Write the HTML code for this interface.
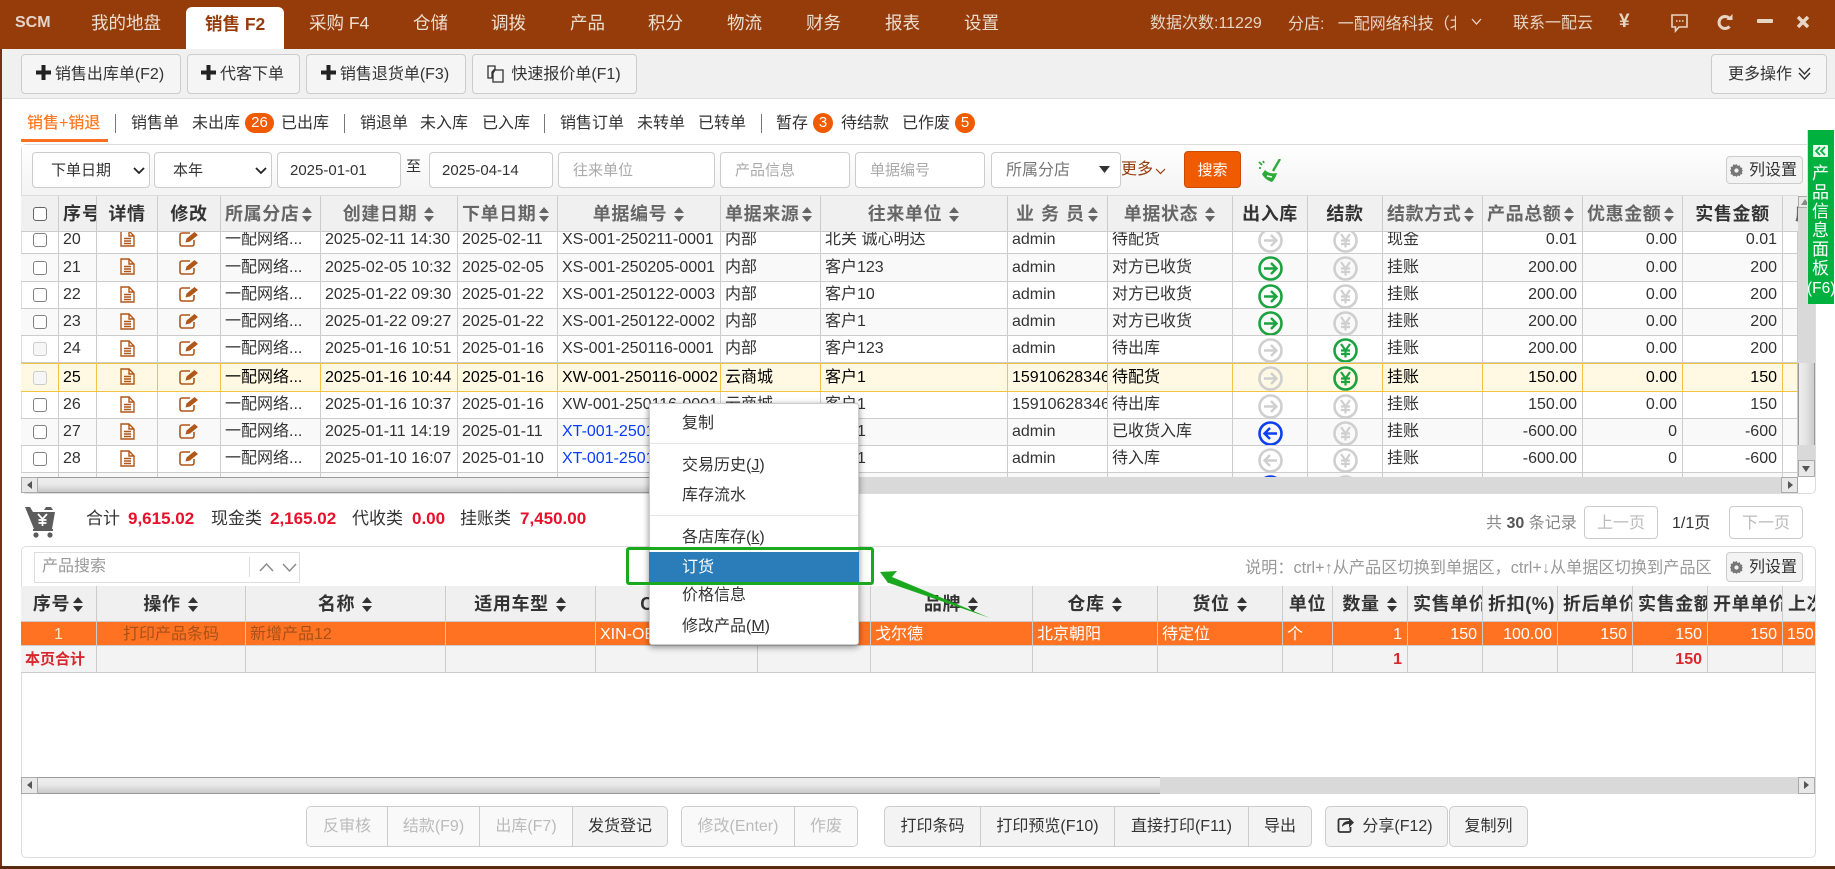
<!DOCTYPE html>
<html lang="zh"><head><meta charset="utf-8"><title>SCM</title>
<style>
html,body{margin:0;padding:0}
body{width:1835px;height:869px;position:relative;overflow:hidden;background:#fff;font-family:"Liberation Sans","Noto Sans CJK SC",sans-serif;font-size:16px;color:#333}
*{box-sizing:border-box}
.a{position:absolute;white-space:nowrap;line-height:20px}
.n{position:absolute;white-space:nowrap;top:12px;line-height:22px;font-size:17.5px;color:#ecdfd2}
.r{position:absolute;white-space:nowrap;top:13px;line-height:22px;font-size:16px;color:#e6d5c5}
.btn{position:absolute;border:1px solid #ccc;border-radius:4px;background:#f5f5f5;line-height:40px;white-space:nowrap;color:#333;text-align:center}
.sub{position:absolute;top:114px;line-height:20px;white-space:nowrap;font-size:16px}
.sep{position:absolute;top:114px;height:19px;width:1px;background:#777}
.bd{position:absolute;top:113px;height:20px;border-radius:10px;background:#f05a00;color:#fff;text-align:center;line-height:20px;font-size:15px}
.inp{position:absolute;top:152px;height:36px;border:1px solid #ccc;border-radius:4px;background:#fff;font-size:15px;line-height:36px;padding-left:14px;white-space:nowrap;overflow:hidden}
.ph{color:#aaa}
table{border-collapse:separate;border-spacing:0;table-layout:fixed;position:absolute;left:0}
td,th{padding:0 4px;border-right:1px solid #ccc;border-bottom:1px solid #ccc;white-space:nowrap;overflow:hidden;vertical-align:middle;text-align:left;font-weight:400;line-height:20px}
th{text-align:center;font-size:18px;font-weight:700;color:#666;letter-spacing:.6px;background:#f0f0f0;padding:0 4px}
th.k{color:#333}
.c{text-align:center}.rr{text-align:right;padding-right:5px}
.s{display:inline-block;width:11px;height:15px;position:relative;vertical-align:-2px;margin-left:7px}
.s:before,.s:after{content:"";position:absolute;left:0;border-left:5.5px solid transparent;border-right:5.5px solid transparent}
.s:before{top:0;border-bottom:6px solid currentColor}
.s:after{bottom:0;border-top:6px solid currentColor}
.cb{display:block;width:14px;height:14px;border:1.5px solid #808080;border-radius:3px;background:#fff;margin:auto}
.cb.x{border-color:#ccc;background:#f6f6f6}
.ic{display:block;margin:auto}
.d{width:15px;height:17px;color:#b0571a;position:relative;top:-1px}
.e{width:20px;height:16px;color:#b0571a;position:relative;top:-1px}
.o{width:25px;height:25px;position:relative;top:1px}
.g{color:#1ba33f}.w{color:#cfcfcf}.u{color:#0b3ff0}
tr.st td{background:#f9f9f9}
tr.hl td{background:#fff9e3;color:#000;border-top:1px solid #f5c242;border-bottom:1px solid #f5c242;border-right-color:#f5c242}
tr.og td{padding-top:2px}
.blue{color:#0a3cff}
.grp{position:absolute;top:806px;height:41px;display:flex;border:1px solid #ccc;border-radius:5px;overflow:hidden;line-height:39px;background:#f3f3f3;color:#333;text-align:center;white-space:nowrap}
.grp b{font-weight:400;border-right:1px solid #ccc;display:block;height:39px}
.grp b:last-child{border-right:0}
.grp .dis{background:#f9f9f9;color:#bbb}
.m{position:absolute;left:682px;line-height:22px;font-size:16px;color:#333;white-space:nowrap}
.m u{text-decoration:underline}
.gs{position:absolute;border:1px solid #ccc;border-radius:4px;background:#f3f3f3;font-size:16px;line-height:28px;white-space:nowrap;padding-left:22px;color:#333}
.vt{position:absolute;left:1807px;width:27px;text-align:center;color:#fff;font-size:17px;line-height:19px}
.sbbg{background:linear-gradient(#eee 0,#e9e9e9 45%,#c9c9c9 100%);border-top:1px solid #999;border-bottom:1px solid #999}
</style></head>
<body>
<svg width="0" height="0" style="position:absolute">
<defs>
<symbol id="d" viewBox="0 0 15 17"><path d="M1 1h8l5 5v10H1zM9 1v5h5M4 8.5h7M4 11h7M4 13.5h7" fill="none" stroke="currentColor" stroke-width="1.4"/></symbol>
<symbol id="e" viewBox="0 0 20 16"><path d="M15 9v4a2 2 0 0 1-2 2H3a2 2 0 0 1-2-2V4a2 2 0 0 1 2-2h8" fill="none" stroke="currentColor" stroke-width="1.6"/><path d="M6.5 11.5l1-4L15.5 1 19 4l-8 6.5z" fill="currentColor"/></symbol>
<symbol id="ar" viewBox="0 0 25 25"><circle cx="12.5" cy="12.5" r="11" fill="none" stroke="currentColor" stroke-width="2.6"/><path d="M6 12.5h12M13 7l5.5 5.5L13 18" fill="none" stroke="currentColor" stroke-width="2.4"/></symbol>
<symbol id="al" viewBox="0 0 25 25"><circle cx="12.5" cy="12.5" r="11" fill="none" stroke="currentColor" stroke-width="2.6"/><path d="M19 12.5H7M12 7l-5.5 5.5L12 18" fill="none" stroke="currentColor" stroke-width="2.4"/></symbol>
<symbol id="y" viewBox="0 0 25 25"><circle cx="12.5" cy="12.5" r="11" fill="none" stroke="currentColor" stroke-width="2.6"/><path d="M8 6l4.5 6.5L17 6M12.5 12v7.5M8 12.5h9M8 16h9" fill="none" stroke="currentColor" stroke-width="2.2"/></symbol>
<symbol id="gear" viewBox="0 0 14 14"><path d="M7 0l1.3 2 2.300-.6.5 2.300 2.300.5-.6 2.300L14 7l-1.200 1.500.6 2.300-2.300.5-.5 1.700-2.300-.6L7 14l-1.300-1.300-2.300.6-.5-1.700-2.300-.5.6-2.300L0 7l1.200-1.500-.6-2.300 2.300-.5.5-2.300 2.300.6z" fill="#777"/><circle cx="7" cy="7" r="2.300" fill="#f3f3f3"/></symbol>
</defs></svg>

<!-- header -->
<div style="position:absolute;left:0;top:0;width:1835px;height:49px;background:#963c0a"></div>
<div style="position:absolute;left:186px;top:7px;width:98px;height:42px;background:#fff;border-radius:6px 6px 0 0"></div>
<span class="n" style="left:15px;font-size:16px;font-weight:700;color:#e2d6cc">SCM</span>
<span class="n" style="left:91px">我的地盘</span>
<span class="n" style="left:205px;top:13px;color:#963c0a;font-weight:700">销售 F2</span>
<span class="n" style="left:309px">采购 F4</span>
<span class="n" style="left:413px">仓储</span>
<span class="n" style="left:491px">调拨</span>
<span class="n" style="left:570px">产品</span>
<span class="n" style="left:648px">积分</span>
<span class="n" style="left:727px">物流</span>
<span class="n" style="left:806px">财务</span>
<span class="n" style="left:885px">报表</span>
<span class="n" style="left:964px">设置</span>
<span class="r" style="left:1150px">数据次数:11229</span>
<span class="r" style="left:1288px;width:168px;overflow:hidden;top:14px">分店:&nbsp;&nbsp;&nbsp;一配网络科技（北京）</span>
<svg style="position:absolute;left:1471px;top:18px" width="11" height="8"><path d="M1 1l4.5 5L10 1" fill="none" stroke="#e6d5c5" stroke-width="1.3"/></svg>
<span class="r" style="left:1513px">联系一配云</span>
<span class="r" style="left:1619px;font-weight:700;font-size:19px;top:11px">¥</span>
<svg style="position:absolute;left:1670px;top:13px" width="20" height="20"><path d="M2 2h15v12H9l-3.5 4v-4H2z" fill="none" stroke="#e6d5c5" stroke-width="1.6"/><path d="M6 8h1.500M9 8h1.500M12 8h1.500" stroke="#e6d5c5" stroke-width="1.6"/></svg>
<svg style="position:absolute;left:1717px;top:14px" width="16" height="17"><path d="M12.5 4.500A6 6 0 1 0 12.5 12.500" fill="none" stroke="#e6d5c5" stroke-width="3"/><path d="M9.500 6h6V0z" fill="#e6d5c5"/></svg>
<div style="position:absolute;left:1757px;top:19px;width:16px;height:4px;background:#e6d5c5;border-radius:1px"></div>
<svg style="position:absolute;left:1796px;top:15px" width="14" height="14"><path d="M2 2l10 10M12 2L2 12" stroke="#e6d5c5" stroke-width="3.4"/></svg>

<!-- toolbar -->
<div style="position:absolute;left:0;top:49px;width:1835px;height:50px;background:#f0f0f0;border-bottom:1px solid #ddd"></div>
<div class="btn" style="left:21px;top:54px;width:160px;height:40px;padding-left:17px">销售出库单(F2)</div>
<div class="btn" style="left:187px;top:54px;width:113px;height:40px;padding-left:17px">代客下单</div>
<div class="btn" style="left:306px;top:54px;width:160px;height:40px;padding-left:17px">销售退货单(F3)</div>
<div class="btn" style="left:472px;top:54px;width:165px;height:40px;padding-left:23px">快速报价单(F1)</div>
<svg style="position:absolute;left:36px;top:65px" width="15" height="15"><path d="M7.500 0v15M0 7.500h15" stroke="#222" stroke-width="4"/></svg>
<svg style="position:absolute;left:201px;top:65px" width="15" height="15"><path d="M7.500 0v15M0 7.500h15" stroke="#222" stroke-width="4"/></svg>
<svg style="position:absolute;left:321px;top:65px" width="15" height="15"><path d="M7.500 0v15M0 7.500h15" stroke="#222" stroke-width="4"/></svg>
<svg style="position:absolute;left:487px;top:65px" width="18" height="18"><path d="M1 1h7v3l-3 3v6H1zM8 5h8v12H6V8z" fill="#f5f5f5" stroke="#333" stroke-width="1.3"/></svg>
<div class="btn" style="left:1711px;top:54px;width:116px;height:40px;padding-right:18px">更多操作</div>
<svg style="position:absolute;left:1797px;top:66px" width="15" height="16"><path d="M2 2l5.500 6L13 2M2 7l5.500 6L13 7" fill="none" stroke="#333" stroke-width="1.4"/></svg>

<!-- sub tabs -->
<span class="sub" style="left:27px;color:#ff7a22;font-weight:500">销售+销退</span>
<div style="position:absolute;left:21px;top:139px;width:87px;height:3px;background:#ff6f1f"></div>
<span class="sep" style="left:115px"></span>
<span class="sub" style="left:131px">销售单</span>
<span class="sub" style="left:192px">未出库</span>
<span class="bd" style="left:245px;width:29px">26</span>
<span class="sub" style="left:281px">已出库</span>
<span class="sep" style="left:344px"></span>
<span class="sub" style="left:360px">销退单</span>
<span class="sub" style="left:420px">未入库</span>
<span class="sub" style="left:482px">已入库</span>
<span class="sep" style="left:544px"></span>
<span class="sub" style="left:560px">销售订单</span>
<span class="sub" style="left:637px">未转单</span>
<span class="sub" style="left:698px">已转单</span>
<span class="sep" style="left:761px"></span>
<span class="sub" style="left:776px">暂存</span>
<span class="bd" style="left:813px;width:20px">3</span>
<span class="sub" style="left:841px">待结款</span>
<span class="sub" style="left:902px">已作废</span>
<span class="bd" style="left:955px;width:20px">5</span>

<!-- filter panel -->
<div style="position:absolute;left:21px;top:144px;width:1795px;height:350px;border:1px solid #ddd;border-radius:5px"></div>
<div style="position:absolute;left:22px;top:145px;width:1793px;height:51px;background:linear-gradient(#fff,#f3f3f3)"></div>
<div class="inp" style="left:32px;width:118px;padding-left:18px">下单日期</div>
<svg style="position:absolute;left:133px;top:167px" width="12" height="8"><path d="M1 1l5 5 5-5" fill="none" stroke="#222" stroke-width="1.8"/></svg>
<div class="inp" style="left:154px;width:118px;padding-left:18px">本年</div>
<svg style="position:absolute;left:255px;top:167px" width="12" height="8"><path d="M1 1l5 5 5-5" fill="none" stroke="#222" stroke-width="1.8"/></svg>
<div class="inp" style="left:277px;width:124px;padding-left:12px">2025-01-01</div>
<span class="a" style="left:406px;top:157px;font-size:15px">至</span>
<div class="inp" style="left:429px;width:124px;padding-left:12px">2025-04-14</div>
<div class="inp ph" style="left:558px;width:157px">往来单位</div>
<div class="inp ph" style="left:720px;width:130px">产品信息</div>
<div class="inp ph" style="left:855px;width:130px">单据编号</div>
<div class="inp" style="left:991px;width:130px;font-size:16px;color:#777">所属分店</div>
<svg style="position:absolute;left:1099px;top:166px" width="11" height="7"><path d="M0 0h11L5.500 7z" fill="#333"/></svg>
<span class="a" style="left:1121px;top:160px;color:#963c0a">更多</span>
<svg style="position:absolute;left:1155px;top:168px" width="11" height="7"><path d="M1 1l4.500 4.500L10 1" fill="none" stroke="#963c0a" stroke-width="1.2"/></svg>
<div style="position:absolute;left:1184px;top:151px;width:57px;height:37px;background:#f05a00;border:1px solid #c94c06;border-radius:4px;color:#fff;text-align:center;line-height:37px;font-size:15px">搜索</div>
<svg style="position:absolute;left:1258px;top:159px" width="25" height="24" fill="none" stroke="#2eaa3a"><path d="M22 0l-7 12" stroke-width="2.400"/><path d="M7 11c3 3 7 4 12 3-1 4-3 7-5 9-4-1-8-4-10-8z" fill="#2eaa3a" stroke="none"/><path d="M1 3l3 3M5 2l1 2M1 9l2 0" stroke-width="1.8"/><path d="M9 17l5 1" stroke="#fff" stroke-width="1.5"/></svg>
<div class="gs" style="left:1726px;top:156px;width:77px;height:28px">列设置</div>
<svg style="position:absolute;left:1730px;top:164px" width="13" height="13"><use href="#gear"/></svg>

<!-- upper table -->
<div style="position:absolute;left:21px;top:195px;width:1777px;height:37px;overflow:hidden;border-top:1px solid #ddd">
<table style="top:0;width:1777px">
<colgroup><col style="width:38px"><col style="width:38px"><col style="width:61px"><col style="width:63px"><col style="width:100px"><col style="width:137px"><col style="width:100px"><col style="width:163px"><col style="width:100px"><col style="width:187px"><col style="width:100px"><col style="width:125px"><col style="width:75px"><col style="width:75px"><col style="width:100px"><col style="width:100px"><col style="width:100px"><col style="width:100px"><col style="width:15px"></colgroup>
<tr style="height:36px">
<th style="padding:0;background:#f0f0f0"><span class="cb" style="border-color:#666;border-width:1.5px"></span></th>
<th class="k" style="text-align:left;padding:0 0 0 4px;letter-spacing:1px">序号</th>
<th class="k">详情</th><th class="k">修改</th>
<th style="padding:0 0 0 4px;text-align:left">所属分店<i class="s" style="margin-left:3px"></i></th>
<th>创建日期<i class="s"></i></th>
<th style="padding:0 0 0 4px;text-align:left">下单日期<i class="s" style="margin-left:3px"></i></th>
<th>单据编号<i class="s"></i></th>
<th style="padding:0 0 0 4px;text-align:left">单据来源<i class="s" style="margin-left:3px"></i></th>
<th>往来单位<i class="s"></i></th>
<th style="padding:0;letter-spacing:1px">业 务 员<i class="s" style="margin-left:3px"></i></th>
<th>单据状态<i class="s"></i></th>
<th class="k" style="padding:0">出入库</th><th class="k">结款</th>
<th style="padding:0 0 0 4px;text-align:left">结款方式<i class="s" style="margin-left:3px"></i></th>
<th style="padding:0 0 0 4px;text-align:left">产品总额<i class="s" style="margin-left:3px"></i></th>
<th style="padding:0 0 0 4px;text-align:left">优惠金额<i class="s" style="margin-left:3px"></i></th>
<th class="k">实售金额</th>
<th style="padding:0 0 0 12px;text-align:left;border-right:0">应收</th>
</tr></table></div>

<div style="position:absolute;left:21px;top:232px;width:1777px;height:245px;overflow:hidden">
<table style="top:-6px;width:1777px">
<colgroup><col style="width:38px"><col style="width:38px"><col style="width:61px"><col style="width:63px"><col style="width:100px"><col style="width:137px"><col style="width:100px"><col style="width:163px"><col style="width:100px"><col style="width:187px"><col style="width:100px"><col style="width:125px"><col style="width:75px"><col style="width:75px"><col style="width:100px"><col style="width:100px"><col style="width:100px"><col style="width:100px"><col style="width:15px"></colgroup>
<tr style="height:28px"><td><i class="cb"></i></td><td>20</td><td><svg class="ic d"><use href="#d"/></svg></td><td><svg class="ic e"><use href="#e"/></svg></td><td>一配网络...</td><td>2025-02-11 14:30</td><td>2025-02-11</td><td>XS-001-250211-0001</td><td>内部</td><td>北关 诚心明达</td><td>admin</td><td>待配货</td><td><svg class="ic o w"><use href="#ar"/></svg></td><td><svg class="ic o w"><use href="#y"/></svg></td><td>现金</td><td class="rr">0.01</td><td class="rr">0.00</td><td class="rr">0.01</td><td></td></tr>
<tr class="st" style="height:28px"><td><i class="cb"></i></td><td>21</td><td><svg class="ic d"><use href="#d"/></svg></td><td><svg class="ic e"><use href="#e"/></svg></td><td>一配网络...</td><td>2025-02-05 10:32</td><td>2025-02-05</td><td>XS-001-250205-0001</td><td>内部</td><td>客户123</td><td>admin</td><td>对方已收货</td><td><svg class="ic o g"><use href="#ar"/></svg></td><td><svg class="ic o w"><use href="#y"/></svg></td><td>挂账</td><td class="rr">200.00</td><td class="rr">0.00</td><td class="rr">200</td><td></td></tr>
<tr style="height:27px"><td><i class="cb"></i></td><td>22</td><td><svg class="ic d"><use href="#d"/></svg></td><td><svg class="ic e"><use href="#e"/></svg></td><td>一配网络...</td><td>2025-01-22 09:30</td><td>2025-01-22</td><td>XS-001-250122-0003</td><td>内部</td><td>客户10</td><td>admin</td><td>对方已收货</td><td><svg class="ic o g"><use href="#ar"/></svg></td><td><svg class="ic o w"><use href="#y"/></svg></td><td>挂账</td><td class="rr">200.00</td><td class="rr">0.00</td><td class="rr">200</td><td></td></tr>
<tr class="st" style="height:27px"><td><i class="cb"></i></td><td>23</td><td><svg class="ic d"><use href="#d"/></svg></td><td><svg class="ic e"><use href="#e"/></svg></td><td>一配网络...</td><td>2025-01-22 09:27</td><td>2025-01-22</td><td>XS-001-250122-0002</td><td>内部</td><td>客户1</td><td>admin</td><td>对方已收货</td><td><svg class="ic o g"><use href="#ar"/></svg></td><td><svg class="ic o w"><use href="#y"/></svg></td><td>挂账</td><td class="rr">200.00</td><td class="rr">0.00</td><td class="rr">200</td><td></td></tr>
<tr style="height:27px"><td><i class="cb x"></i></td><td>24</td><td><svg class="ic d"><use href="#d"/></svg></td><td><svg class="ic e"><use href="#e"/></svg></td><td>一配网络...</td><td>2025-01-16 10:51</td><td>2025-01-16</td><td>XS-001-250116-0001</td><td>内部</td><td>客户123</td><td>admin</td><td>待出库</td><td><svg class="ic o w"><use href="#ar"/></svg></td><td><svg class="ic o g"><use href="#y"/></svg></td><td>挂账</td><td class="rr">200.00</td><td class="rr">0.00</td><td class="rr">200</td><td></td></tr>
<tr class="hl" style="height:29px"><td><i class="cb x"></i></td><td>25</td><td><svg class="ic d"><use href="#d"/></svg></td><td><svg class="ic e"><use href="#e"/></svg></td><td>一配网络...</td><td>2025-01-16 10:44</td><td>2025-01-16</td><td>XW-001-250116-0002</td><td>云商城</td><td>客户1</td><td>15910628346</td><td>待配货</td><td><svg class="ic o w"><use href="#ar"/></svg></td><td><svg class="ic o g"><use href="#y"/></svg></td><td>挂账</td><td class="rr">150.00</td><td class="rr">0.00</td><td class="rr">150</td><td></td></tr>
<tr style="height:27px"><td><i class="cb"></i></td><td>26</td><td><svg class="ic d"><use href="#d"/></svg></td><td><svg class="ic e"><use href="#e"/></svg></td><td>一配网络...</td><td>2025-01-16 10:37</td><td>2025-01-16</td><td>XW-001-250116-0001</td><td>云商城</td><td>客户1</td><td>15910628346</td><td>待出库</td><td><svg class="ic o w"><use href="#ar"/></svg></td><td><svg class="ic o w"><use href="#y"/></svg></td><td>挂账</td><td class="rr">150.00</td><td class="rr">0.00</td><td class="rr">150</td><td></td></tr>
<tr class="st" style="height:27px"><td><i class="cb"></i></td><td>27</td><td><svg class="ic d"><use href="#d"/></svg></td><td><svg class="ic e"><use href="#e"/></svg></td><td>一配网络...</td><td>2025-01-11 14:19</td><td>2025-01-11</td><td class="blue">XT-001-250111-0001</td><td>内部</td><td>客户1</td><td>admin</td><td>已收货入库</td><td><svg class="ic o u"><use href="#al"/></svg></td><td><svg class="ic o w"><use href="#y"/></svg></td><td>挂账</td><td class="rr">-600.00</td><td class="rr">0</td><td class="rr">-600</td><td></td></tr>
<tr style="height:27px"><td><i class="cb"></i></td><td>28</td><td><svg class="ic d"><use href="#d"/></svg></td><td><svg class="ic e"><use href="#e"/></svg></td><td>一配网络...</td><td>2025-01-10 16:07</td><td>2025-01-10</td><td class="blue">XT-001-250110-0001</td><td>内部</td><td>客户1</td><td>admin</td><td>待入库</td><td><svg class="ic o w"><use href="#al"/></svg></td><td><svg class="ic o w"><use href="#y"/></svg></td><td>挂账</td><td class="rr">-600.00</td><td class="rr">0</td><td class="rr">-600</td><td></td></tr>
<tr class="st" style="height:27px"><td></td><td></td><td><svg class="ic d"><use href="#d"/></svg></td><td><svg class="ic e"><use href="#e"/></svg></td><td></td><td></td><td></td><td></td><td></td><td></td><td></td><td></td><td><svg class="ic o u"><use href="#al"/></svg></td><td><svg class="ic o w"><use href="#y"/></svg></td><td></td><td></td><td></td><td></td><td></td></tr>
</table></div>

<!-- v scrollbar -->
<div style="position:absolute;left:1798px;top:196px;width:17px;height:281px;background:#d9d9d9"></div>
<div style="position:absolute;left:1798px;top:196px;width:17px;height:12px;background:#e8e8e8;border:1px solid #aaa"></div>
<div style="position:absolute;left:1801px;top:199px;width:0;height:0;border-left:4px solid transparent;border-right:4px solid transparent;border-bottom:6px solid #888"></div>
<div style="position:absolute;left:1798px;top:363px;width:17px;height:82px;background:linear-gradient(90deg,#eee 0,#e4e4e4 45%,#ccc 100%);border-left:1px solid #999;border-right:1px solid #999"></div>
<div style="position:absolute;left:1798px;top:460px;width:17px;height:17px;background:#e8e8e8;border:1px solid #aaa"></div>
<div style="position:absolute;left:1802px;top:466px;width:0;height:0;border-left:4.5px solid transparent;border-right:4.5px solid transparent;border-top:6px solid #555"></div>

<!-- h scrollbar upper -->
<div style="position:absolute;left:21px;top:477px;width:1777px;height:16px;background:#d9d9d9"></div>
<div class="sbbg" style="position:absolute;left:21px;top:477px;width:640px;height:16px"></div>
<div style="position:absolute;left:21px;top:477px;width:17px;height:16px;background:#e8e8e8;border:1px solid #aaa"></div>
<div style="position:absolute;left:27px;top:481px;width:0;height:0;border-top:4.5px solid transparent;border-bottom:4.5px solid transparent;border-right:5px solid #555"></div>
<div style="position:absolute;left:1781px;top:477px;width:17px;height:16px;background:#e8e8e8;border:1px solid #aaa"></div>
<div style="position:absolute;left:1788px;top:481px;width:0;height:0;border-top:4.5px solid transparent;border-bottom:4.5px solid transparent;border-left:5px solid #555"></div>

<!-- stats -->
<svg style="position:absolute;left:24px;top:505px" width="34" height="33"><path d="M1 2h5l3 5h22l-3 17H10z" fill="#5c5c5c"/><path d="M9 24h20v2H9z" fill="#5c5c5c"/><circle cx="12" cy="30" r="2.6" fill="#5c5c5c"/><circle cx="26" cy="30" r="2.6" fill="#5c5c5c"/><path d="M14 9l4.5 5 4.500-5M18.500 14v7M14.500 15h8M14.500 18h8" stroke="#fff" stroke-width="1.8" fill="none"/><path d="M22 2l5 0 2 3h-9z" fill="#5c5c5c"/></svg>
<span class="a" style="left:86px;top:509px;font-size:17px">合计</span>
<span class="a" style="left:128px;top:509px;font-size:17px;font-weight:700;color:#e8102a">9,615.02</span>
<span class="a" style="left:211px;top:509px;font-size:17px">现金类</span>
<span class="a" style="left:270px;top:509px;font-size:17px;font-weight:700;color:#e8102a">2,165.02</span>
<span class="a" style="left:352px;top:509px;font-size:17px">代收类</span>
<span class="a" style="left:412px;top:509px;font-size:17px;font-weight:700;color:#e8102a">0.00</span>
<span class="a" style="left:460px;top:509px;font-size:17px">挂账类</span>
<span class="a" style="left:520px;top:509px;font-size:17px;font-weight:700;color:#e8102a">7,450.00</span>

<!-- pager -->
<span class="a" style="left:1486px;top:514px;color:#888">共 <b style="color:#555">30</b> 条记录</span>
<div class="btn" style="left:1584px;top:506px;width:74px;height:33px;line-height:33px;background:#fff;color:#bbb">上一页</div>
<span class="a" style="left:1672px;top:514px">1/1页</span>
<div class="btn" style="left:1729px;top:506px;width:74px;height:33px;line-height:33px;background:#fff;color:#bbb">下一页</div>

<!-- lower panel -->
<div style="position:absolute;left:21px;top:546px;width:1795px;height:312px;border:1px solid #ddd;border-radius:5px"></div>
<div style="position:absolute;left:34px;top:552px;width:266px;height:31px;border:1px solid #ddd;background:#fff"></div>
<span class="a" style="left:42px;top:557px;color:#999;font-size:16px">产品搜索</span>
<div style="position:absolute;left:249px;top:557px;width:1px;height:20px;background:#ddd"></div>
<svg style="position:absolute;left:259px;top:562px" width="40" height="11" fill="none" stroke="#888" stroke-width="1.4"><path d="M1 9l6.500-7L14 9M24 2l6.500 7L37 2"/></svg>
<span class="a" style="left:1245px;top:558px;color:#999;font-size:16.2px">说明：ctrl+↑从产品区切换到单据区，ctrl+↓从单据区切换到产品区</span>
<div class="gs" style="left:1726px;top:552px;width:77px;height:30px;line-height:30px">列设置</div>
<svg style="position:absolute;left:1730px;top:561px" width="13" height="13"><use href="#gear"/></svg>

<div style="position:absolute;left:21px;top:586px;width:1794px;height:87px;overflow:hidden">
<table style="top:0;width:1794px">
<colgroup><col style="width:76px"><col style="width:149px"><col style="width:200px"><col style="width:150px"><col style="width:162px"><col style="width:113px"><col style="width:162px"><col style="width:125px"><col style="width:125px"><col style="width:50px"><col style="width:75px"><col style="width:75px"><col style="width:75px"><col style="width:75px"><col style="width:75px"><col style="width:75px"><col style="width:32px"></colgroup>
<tr style="height:36px">
<th class="k">序号<i class="s" style="margin-left:3px"></i></th><th class="k">操作<i class="s"></i></th><th class="k">名称<i class="s"></i></th><th class="k">适用车型<i class="s"></i></th><th class="k">CODE<i class="s"></i></th><th class="k">规格<i class="s"></i></th><th class="k">品牌<i class="s"></i></th><th class="k">仓库<i class="s"></i></th><th class="k">货位<i class="s"></i></th><th class="k" style="padding:0">单位</th><th class="k" style="padding:0">数量<i class="s"></i></th>
<th class="k" style="text-align:left;padding:0 0 0 5px">实售单价</th><th class="k" style="text-align:left;padding:0 0 0 5px">折扣(%)</th><th class="k" style="text-align:left;padding:0 0 0 5px">折后单价</th><th class="k" style="text-align:left;padding:0 0 0 5px">实售金额</th><th class="k" style="text-align:left;padding:0 0 0 5px">开单单价</th><th class="k" style="text-align:left;padding:0 0 0 5px;border-right:0">上次</th></tr>
<tr style="height:24px;color:#fff" class="og">
<td class="c" style="background:#ff7222;color:#ffe6c9">1</td><td class="c" style="background:#ff7222;color:#a8501a">打印产品条码</td><td style="background:#ff7222;color:#a8501a">新增产品12</td><td style="background:#ff7222"></td><td style="background:#ff7222">XIN-OEM-0012</td><td style="background:#ff7222"></td><td style="background:#ff7222">戈尔德</td><td style="background:#ff7222">北京朝阳</td><td style="background:#ff7222">待定位</td><td style="background:#ff7222">个</td><td class="rr" style="background:#ff7222">1</td><td class="rr" style="background:#ff7222">150</td><td class="rr" style="background:#ff7222">100.00</td><td class="rr" style="background:#ff7222">150</td><td class="rr" style="background:#ff7222">150</td><td class="rr" style="background:#ff7222">150</td><td style="background:#ff7222;border-right:0;padding:2px 0 0 4px">150</td></tr>
<tr class="og" style="height:27px;background:#f3f3f3">
<td style="color:#d9272e;font-weight:700;font-size:15px;padding:2px 0 0 4px">本页合计</td><td></td><td></td><td></td><td></td><td></td><td></td><td></td><td></td><td></td><td class="rr" style="color:#d9272e;font-weight:700">1</td><td></td><td></td><td></td><td class="rr" style="color:#d9272e;font-weight:700">150</td><td></td><td style="border-right:0"></td></tr>
</table></div>

<!-- h scrollbar lower -->
<div style="position:absolute;left:21px;top:777px;width:1794px;height:17px;background:#d9d9d9"></div>
<div class="sbbg" style="position:absolute;left:21px;top:777px;width:1139px;height:17px"></div>
<div style="position:absolute;left:21px;top:777px;width:17px;height:17px;background:#e8e8e8;border:1px solid #aaa"></div>
<div style="position:absolute;left:27px;top:781px;width:0;height:0;border-top:4.5px solid transparent;border-bottom:4.5px solid transparent;border-right:5px solid #555"></div>
<div style="position:absolute;left:1798px;top:777px;width:17px;height:17px;background:#e8e8e8;border:1px solid #aaa"></div>
<div style="position:absolute;left:1804px;top:781px;width:0;height:0;border-top:4.5px solid transparent;border-bottom:4.5px solid transparent;border-left:5px solid #555"></div>

<!-- bottom buttons -->
<div class="grp" style="left:306px;width:362px"><b class="dis" style="width:81px">反审核</b><b class="dis" style="width:92px">结款(F9)</b><b class="dis" style="width:93px">出库(F7)</b><b style="width:94px">发货登记</b></div>
<div class="grp" style="left:681px;width:177px"><b class="dis" style="width:113px">修改(Enter)</b><b class="dis" style="width:62px">作废</b></div>
<div class="grp" style="left:884px;width:428px"><b style="width:96px">打印条码</b><b style="width:134px">打印预览(F10)</b><b style="width:134px">直接打印(F11)</b><b style="width:62px">导出</b></div>
<div class="grp" style="left:1325px;width:123px;padding-left:22px"><b style="width:99px">分享(F12)</b></div>
<svg style="position:absolute;left:1337px;top:816px" width="17" height="17"><path d="M12 3H3a1.500 1.500 0 0 0-1.500 1.500v10A1.500 1.500 0 0 0 3 16h9a1.500 1.500 0 0 0 1.500-1.500V11" fill="none" stroke="#333" stroke-width="1.8"/><path d="M5 11c0-4 3-6 7-6V1.500l5 5-5 5V8c-3 0-5 1-7 3z" fill="#333"/></svg>
<div class="grp" style="left:1449px;width:79px"><b style="width:77px">复制列</b></div>

<!-- green panel -->
<div style="position:absolute;left:1807px;top:130px;width:27px;height:174px;background:#00b140;border-left:1px solid #cde8d3"></div>
<div style="position:absolute;left:1813px;top:145px;width:15px;height:12px;background:#e9f9ec;border-radius:1px"></div>
<svg style="position:absolute;left:1813px;top:145px" width="15" height="12"><path d="M7 2L3 6l4 4M12 2L8 6l4 4" fill="none" stroke="#00b140" stroke-width="1.8"/></svg>
<span class="vt" style="top:164px">产</span>
<span class="vt" style="top:183px">品</span>
<span class="vt" style="top:202px">信</span>
<span class="vt" style="top:221px">息</span>
<span class="vt" style="top:240px">面</span>
<span class="vt" style="top:259px">板</span>
<span class="vt" style="top:279px;font-size:15.5px;white-space:nowrap">(F6)</span>

<!-- context menu -->
<div style="position:absolute;left:649px;top:403px;width:210px;height:242px;background:#fff;border:1px solid #ccc;border-radius:3px;box-shadow:0 2px 7px rgba(0,0,0,.45)"></div>
<span class="m" style="top:413px">复制</span>
<div style="position:absolute;left:650px;top:443px;width:208px;height:1px;background:#e5e5e5"></div>
<span class="m" style="top:455px">交易历史(<u>J</u>)</span>
<span class="m" style="top:485px">库存流水</span>
<div style="position:absolute;left:650px;top:515px;width:208px;height:1px;background:#e5e5e5"></div>
<span class="m" style="top:527px">各店库存(<u>k</u>)</span>
<div style="position:absolute;left:649px;top:552px;width:210px;height:30px;background:#2a7db8"></div>
<span class="m" style="top:557px;color:#fff">订货</span>
<span class="m" style="top:585px">价格信息</span>
<span class="m" style="top:616px">修改产品(<u>M</u>)</span>

<!-- annotation -->
<div style="position:absolute;left:626px;top:547px;width:248px;height:38px;border:3.5px solid #1aa81e;border-radius:3px"></div>
<svg style="position:absolute;left:870px;top:560px" width="130" height="65"><path d="M10 12L27 11 22 17 120 58 19 23 18 23z" fill="#1aa81e"/></svg>

<!-- edges -->
<div style="position:absolute;left:0;top:49px;width:2px;height:820px;background:#7a3010"></div>
<div style="position:absolute;left:0;top:866px;width:1835px;height:3px;background:#5a2a10"></div>
</body></html>
